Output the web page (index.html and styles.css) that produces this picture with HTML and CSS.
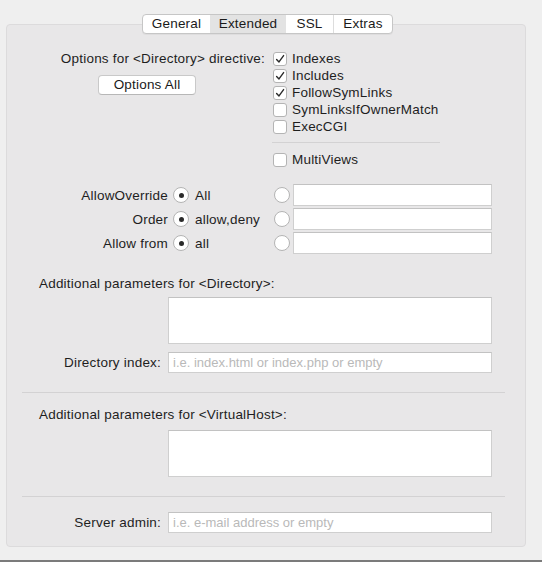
FILE: index.html
```html
<!DOCTYPE html>
<html>
<head>
<meta charset="utf-8">
<link rel="stylesheet" href="styles.css">
</head>
<body>
<div class="window">
  <nav class="tabs">
    <span class="tab t-general">General</span>
    <span class="tab t-extended active">Extended</span>
    <span class="tab t-ssl">SSL</span>
    <span class="tab t-extras">Extras</span>
  </nav>
  <section class="panel">
    <div class="options">
      <div class="opt-left">
        <div class="opt-label">Options for &lt;Directory&gt; directive:</div>
        <div class="btn">Options All</div>
      </div>
      <div class="opt-right">
        <div class="check"><span class="box"><svg viewBox="0 0 14 14" width="14" height="14"><path d="M3.6 7.4 L6 9.9 L10.6 3.6" fill="none" stroke="#2a2a2a" stroke-width="1.4" stroke-linecap="round" stroke-linejoin="round"/></svg></span>Indexes</div>
        <div class="check"><span class="box"><svg viewBox="0 0 14 14" width="14" height="14"><path d="M3.6 7.4 L6 9.9 L10.6 3.6" fill="none" stroke="#2a2a2a" stroke-width="1.4" stroke-linecap="round" stroke-linejoin="round"/></svg></span>Includes</div>
        <div class="check"><span class="box"><svg viewBox="0 0 14 14" width="14" height="14"><path d="M3.6 7.4 L6 9.9 L10.6 3.6" fill="none" stroke="#2a2a2a" stroke-width="1.4" stroke-linecap="round" stroke-linejoin="round"/></svg></span>FollowSymLinks</div>
        <div class="check"><span class="box"></span>SymLinksIfOwnerMatch</div>
        <div class="check"><span class="box"></span>ExecCGI</div>
        <div class="sep sep-short"></div>
        <div class="check"><span class="box"></span>MultiViews</div>
      </div>
    </div>

    <div class="radios">
      <div class="rrow">
        <span class="rlabel">AllowOverride</span>
        <span class="radio radio-a on"></span>
        <span class="rval">All</span>
        <span class="radio"></span>
        <span class="field"></span>
      </div>
      <div class="rrow">
        <span class="rlabel">Order</span>
        <span class="radio radio-a on"></span>
        <span class="rval">allow,deny</span>
        <span class="radio"></span>
        <span class="field"></span>
      </div>
      <div class="rrow">
        <span class="rlabel">Allow from</span>
        <span class="radio radio-a on"></span>
        <span class="rval">all</span>
        <span class="radio"></span>
        <span class="field"></span>
      </div>
    </div>

    <div class="block-label bl-dir">Additional parameters for &lt;Directory&gt;:</div>
    <div class="area-row"><div class="area"></div></div>
    <div class="frow fr-index">
      <span class="flabel">Directory index:</span>
      <span class="field wide ph">i.e. index.html or index.php or empty</span>
    </div>

    <div class="sep sep-wide sw-1"></div>

    <div class="block-label bl-vh">Additional parameters for &lt;VirtualHost&gt;:</div>
    <div class="area-row"><div class="area area-vh"></div></div>

    <div class="sep sep-wide sw-2"></div>

    <div class="frow fr-admin">
      <span class="flabel">Server admin:</span>
      <span class="field wide ph">i.e. e-mail address or empty</span>
    </div>
  </section>
  <div class="bottombar"></div>
</div>
</body>
</html>
```

FILE: styles.css
```css
* { box-sizing: border-box; }

html, body {
  margin: 0;
  padding: 0;
}

body {
  background: #efefef;
  font-family: "Liberation Sans", Arial, sans-serif;
  font-size: 13.5px;
  letter-spacing: 0.2px;
  color: #1e1e1e;
  width: 542px;
  height: 562px;
  overflow: hidden;
}

.window {
  display: flex;
  flex-direction: column;
  height: 562px;
}

/* ---------- tabs ---------- */
.tabs {
  position: relative;
  z-index: 2;
  align-self: flex-start;
  margin: 14px 0 -10px 142px;
  display: flex;
  height: 20px;
  background: #ffffff;
  border: 1px solid #c6c6c6;
  border-radius: 4px;
  box-shadow: 0 1px 0 rgba(0,0,0,0.04);
  overflow: hidden;
}

.tab {
  display: flex;
  align-items: center;
  justify-content: center;
  height: 100%;
  line-height: 18px;
  color: #1a1a1a;
  border-left: 1px solid #dddddd;
}
.tab:first-child { border-left: none; }
.t-general { width: 67px; }
.t-extended { width: 75px; }
.t-ssl { width: 48px; }
.t-extras { width: 59px; }
.tab.active { background: #e3e3e3; border-left-color: #e3e3e3; }
.tab.active + .tab { border-left-color: #e3e3e3; }

/* ---------- panel ---------- */
.panel {
  margin: 0 16px 0 6px;
  height: 523px;
  background: #e8e7e8;
  border: 1px solid #dcdbdc;
  border-radius: 4px;
  padding: 25px 0 0 0;
}

.options {
  display: flex;
}

.opt-left {
  width: 258px;
  display: flex;
  flex-direction: column;
  align-items: flex-start;
}

.opt-label {
  align-self: flex-end;
  height: 17px;
  line-height: 17px;
}

.btn {
  margin: 8px 0 0 91px;
  width: 98px;
  height: 20px;
  line-height: 18px;
  text-align: center;
  background: #ffffff;
  border: 1px solid #c9c9c9;
  border-bottom-color: #b7b7b7;
  border-radius: 4px;
  color: #1a1a1a;
}

.opt-right {
  margin-left: 8px;
  display: flex;
  flex-direction: column;
}

.check {
  display: flex;
  align-items: center;
  height: 17px;
  line-height: 17px;
}

.box {
  width: 14px;
  height: 14px;
  margin-right: 5px;
  background: #ffffff;
  border: 1px solid #b4b4b4;
  border-radius: 3px;
  position: relative;
  flex: none;
}
.box svg {
  position: absolute;
  left: -1px;
  top: -1px;
}

.sep {
  height: 1px;
  background: #d3d2d3;
}
.sep-short {
  width: 168px;
  margin: 7px 0 8px -1px;
}

/* ---------- radio rows ---------- */
.radios {
  margin-top: 16px;
  display: flex;
  flex-direction: column;
  gap: 2px;
}

.rrow {
  display: flex;
  align-items: center;
  height: 22px;
}

.rlabel {
  width: 161px;
  text-align: right;
}

.radio {
  width: 16px;
  height: 16px;
  border-radius: 50%;
  background: #ffffff;
  border: 1px solid #b4b4b4;
  flex: none;
  display: flex;
  align-items: center;
  justify-content: center;
}
.radio-a { margin-left: 5px; }
.radio.on::after {
  content: "";
  width: 5px;
  height: 5px;
  border-radius: 50%;
  background: #2a2a2a;
}

.rval {
  width: 85px;
  padding-left: 6px;
}

.field {
  display: block;
  margin-left: 3px;
  width: 199px;
  height: 22px;
  background: #ffffff;
  border: 1px solid #cfcfcf;
  border-top-color: #c2c2c2;
}

/* ---------- blocks ---------- */
.block-label {
  padding-left: 32px;
  height: 17px;
  line-height: 17px;
}
.bl-dir { margin-top: 21px; }
.bl-vh { margin-top: 13px; }

.area-row {
  padding-left: 161px;
}
.area {
  margin-top: 5px;
  width: 324px;
  height: 47px;
  background: #ffffff;
  border: 1px solid #cfcfcf;
  border-top-color: #c2c2c2;
}
.area-vh { margin-top: 7px; }

.frow {
  display: flex;
  align-items: center;
}
.fr-index { margin-top: 8px; }
.fr-admin { margin-top: 15px; }

.flabel {
  width: 154px;
  text-align: right;
  margin-right: 7px;
}

.field.wide {
  margin-left: 0;
  width: 324px;
  height: 21px;
  line-height: 19px;
  padding-left: 4px;
  font-size: 13px;
  letter-spacing: 0;
}
.ph { color: #b9b9b9; }

.sep-wide {
  margin: 0 20px 0 15px;
}
.sw-1 { margin-top: 19px; }
.sw-2 { margin-top: 19px; }

.bottombar {
  margin-top: auto;
  height: 2px;
  background: #7b7b7b;
}
```
